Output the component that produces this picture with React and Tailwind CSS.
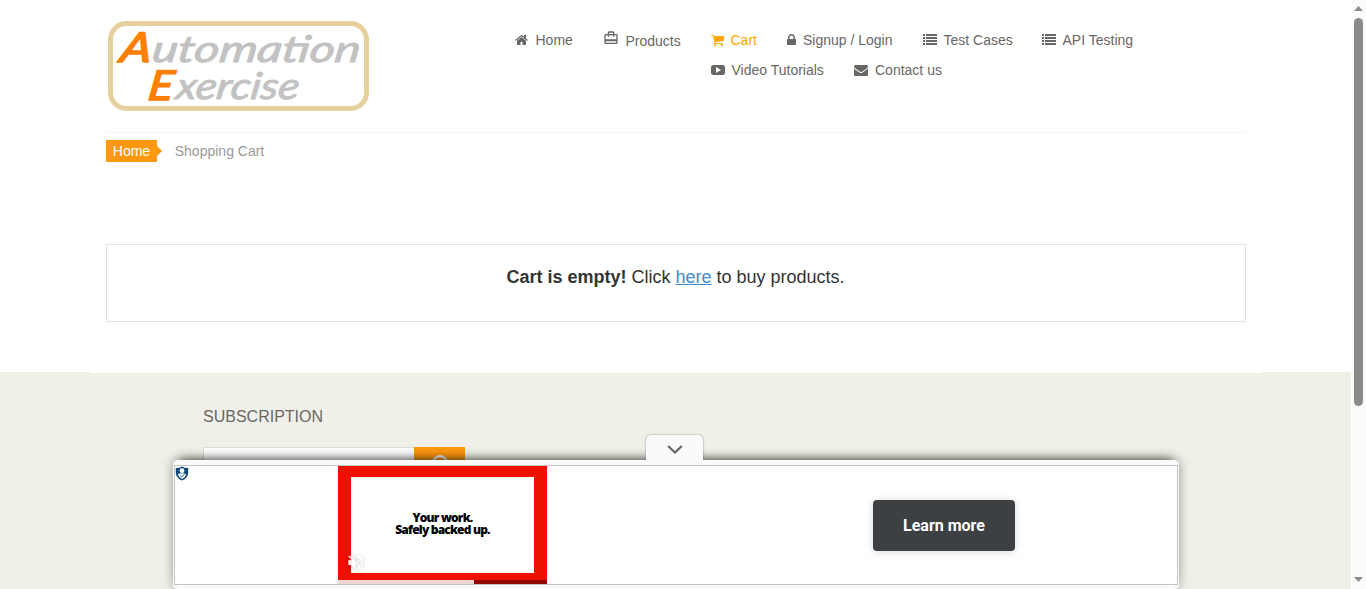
import React from "react";

const paths = {
  home: "M1472 992v480q0 26-19 45t-45 19h-384v-384h-256v384h-384q-26 0-45-19t-19-45v-480q0-1 .5-3t.5-3l575-474 575 474q1 2 1 6zm223-69l-62 74q-8 9-21 11h-3q-13 0-21-7l-692-577-692 577q-12 8-24 7-13-2-21-11l-62-74q-8-10-7-23.5t11-21.5l719-599q32-26 76-26t76 26l244 204v-195q0-14 9-23t23-9h192q14 0 23 9t9 23v408l219 182q10 8 11 21.5t-7 23.5z",
  cart: "M704 1536q0 52-38 90t-90 38-90-38-38-90 38-90 90-38 90 38 38 90zm896 0q0 52-38 90t-90 38-90-38-38-90 38-90 90-38 90 38 38 90zm128-1088v512q0 24-16.5 42.5t-40.5 21.5l-1044 122q13 60 13 70 0 16-24 64h920q26 0 45 19t19 45-19 45-45 19h-1024q-26 0-45-19t-19-45q0-11 8-31.5t16-36 21.5-40 15.5-29.5l-177-823h-204q-26 0-45-19t-19-45 19-45 45-19h256q16 0 28.5 6.5t19.5 15.5 13 24.5 8 26 5.5 29.5 4.5 26h1201q26 0 45 19t19 45z",
  lock: "M640 768h512v-192q0-106-75-181t-181-75-181 75-75 181v192zm832 96v576q0 40-28 68t-68 28h-960q-40 0-68-28t-28-68v-576q0-40 28-68t68-28h32v-192q0-184 132-316t316-132 316 132 132 316v192h32q40 0 68 28t28 68z",
  list: "M0 128h256v256H0zM384 128h1408v256H384zM0 512h256v256H0zM384 512h1408v256H384zM0 896h256v256H0zM384 896h1408v256H384zM0 1280h256v256H0zM384 1280h1408v256H384z",
  video: "M300 256H1492Q1792 256 1792 556V1236Q1792 1536 1492 1536H300Q0 1536 0 1236V556Q0 256 300 256ZM640 500V1290L1280 896Z",
  mail: "M1792 710v794q0 66-47 113t-113 47h-1472q-66 0-113-47t-47-113v-794q44 49 101 87 362 246 497 345 57 42 92.5 65.5t94.5 48 110 24.5h2q51 0 110-24.5t94.5-48 92.5-65.5q170-123 498-345 57-39 100-87zm0-294q0 79-49 151t-122 123q-376 261-468 325-10 7-42.5 31t-54 38.5-52 32.5-57.5 27-50 9h-2q-23 0-50-9t-57.5-27-52-32.5-54-38.5-42.5-31q-91-64-262-182.5t-205-142.5q-62-42-117-115.5t-55-136.5q0-78 41.5-130t118.5-52h1472q65 0 112.5 47t47.5 113z",
};

function Glyph({ name, className, viewBox = "0 0 1792 1792" }) {
  return (
    <svg className={`h-[14px] shrink-0 ${className}`} viewBox={viewBox} fill="currentColor" fillRule="evenodd">
      <path d={paths[name]} />
    </svg>
  );
}

function NavItem({ className, children }) {
  return <a className={`flex h-5 shrink-0 items-center whitespace-nowrap ${className}`}>{children}</a>;
}

function Logo() {
  return (
    <svg className="mt-[21px] ml-0.5 h-[90px] w-[261px] shrink-0" viewBox="0 0 261 90">
      <rect x="2.5" y="2.5" width="256" height="85" rx="16" fill="white" stroke="#e6d09e" strokeWidth="5" />
      <g fontFamily="Lato, sans-serif" fontStyle="italic" fill="#c2c2c2" stroke="#c2c2c2" strokeWidth="0.9">
        <text transform="translate(11 41) skewX(-10)" fontSize="41" fill="#ff8000" stroke="#ff8000" strokeWidth="1.6" textLength="31" lengthAdjust="spacingAndGlyphs">A</text>
        <text transform="translate(43 41) skewX(-8)" fontSize="37" textLength="208" lengthAdjust="spacingAndGlyphs">utomation</text>
        <text transform="translate(39 79) skewX(-8)" fontSize="41" fill="#ff8000" stroke="#ff8000" strokeWidth="1.6" textLength="25" lengthAdjust="spacingAndGlyphs">E</text>
        <text transform="translate(67 78) skewX(-8)" fontSize="37" textLength="123" lengthAdjust="spacingAndGlyphs">xercise</text>
      </g>
    </svg>
  );
}

function Header() {
  return (
    <header className="mx-[106px] flex h-[133px] w-[1140px] border-b border-[#f5f5f5]">
      <Logo />
      <nav className="mt-[30px] ml-[146px] flex flex-col gap-2.5 text-[14px] leading-5 text-[#696763]">
        <div className="flex">
          <NavItem className="w-[88px]">
            <Glyph name="home" className="mr-[7.5px] w-[13px]" viewBox="64 0 1664 1792" />Home
          </NavItem>
          <NavItem className="w-[108px]">
            <svg className="-mt-1 mr-[6.5px] h-4 w-4 shrink-0" viewBox="0 0 24 24" fill="currentColor">
              <path d="M20 6h-3V4c0-1.11-.89-2-2-2H9c-1.11 0-2 .89-2 2v2H4c-1.11 0-2 .89-2 2v11c0 1.11.89 2 2 2h16c1.11 0 2-.89 2-2V8c0-1.11-.89-2-2-2zM9 4h6v2H9V4zm11 15H4v-2h16v2zm0-5H4V8h3v2h2V8h6v2h2V8h3v6z" />
            </svg>
            <span className="mt-0.5">Products</span>
          </NavItem>
          <NavItem className="w-[76px] text-[#ffa500]">
            <Glyph name="cart" className="mr-[6.5px] w-[13px]" viewBox="64 0 1664 1792" />Cart
          </NavItem>
          <NavItem className="w-[136px]">
            <Glyph name="lock" className="mr-[7px] w-[9px]" viewBox="320 0 1152 1792" />Signup / Login
          </NavItem>
          <NavItem className="w-[119px]"><Glyph name="list" className="mr-[6.5px] w-[14px]" />Test Cases</NavItem>
          <NavItem className="w-[100px]"><Glyph name="list" className="mr-[6.5px] w-[14px]" />API Testing</NavItem>
        </div>
        <div className="ml-[196px] flex">
          <NavItem className="w-[143px]"><Glyph name="video" className="mr-[6.5px] w-[14px]" />Video Tutorials</NavItem>
          <NavItem className=""><Glyph name="mail" className="mr-[7px] w-[14px]" />Contact us</NavItem>
        </div>
      </nav>
    </header>
  );
}

function AdBanner() {
  return (
    <aside className="absolute top-[435px] left-[173px] flex w-[1006px] flex-col">
      <div className="absolute top-[25px] h-[129px] w-[1006px] rounded-[5px] shadow-[0_-7px_10px_-7px_rgba(0,0,0,0.7),0_0_12px_rgba(0,0,0,0.3)]" />
      <div className="relative ml-[473px] flex h-[25px] w-[57px] items-center justify-center rounded-t-[5px] bg-[#fafafa] shadow-[0_0_2px_rgba(0,0,0,0.45)]">
        <svg className="mt-[4px] h-[9px] w-4" viewBox="0 0 16 9" fill="none" stroke="#616161" strokeWidth="2">
          <path d="M1.2 1l6.8 6.5L14.8 1" />
        </svg>
      </div>
      <div className="relative h-[129px] rounded-[5px] bg-[#fafafa] px-px pt-[4.5px]">
        <div className="flex h-[120px] border border-[#c5c5c5] bg-white">
          <svg className="h-[15px] w-[14px] shrink-0" viewBox="0 0 14 15">
            <path d="M7 .4Q9.5 2 13.2 2V7Q13 12 7 14.6Q1 12 .8 7V2Q4.5 2 7 .4Z" fill="#134a7c" />
            <circle cx="7" cy="4.7" r="2.4" fill="white" />
            <path d="M2.8 8.2Q7 6.4 11.2 8.2Q10.5 11.2 7 13Q3.5 11.2 2.8 8.2Z" fill="white" />
            <path d="M5 9.5l1.5 1.4L9.5 8.5" fill="none" stroke="#134a7c" strokeWidth=".9" />
          </svg>
          <div className="relative ml-[149px] flex h-[118px] w-[209px] shrink-0 flex-col bg-[#ec1100]">
            <div className="mt-[11px] ml-[13px] flex h-24 w-[183px] flex-col items-center justify-center bg-white pb-0.5 font-['Open_Sans',sans-serif] text-[12px] leading-3 font-extrabold tracking-[-0.8px] text-black">
              <span>Your work.</span>
              <span>Safely backed up.</span>
            </div>
            <div className="mt-[7px] flex h-1 w-full bg-[#8f0900]"><div className="h-full w-[136px] bg-[#f1d5d3]" /></div>
            <svg className="absolute top-[87px] left-[8px] h-[19px] w-[19px] drop-shadow-[0_0_3px_rgba(0,0,0,0.25)]" viewBox="0 0 24 24" fill="white">
              <path d="M16.5 12c0-1.77-1.02-3.29-2.5-4.03v2.21l2.45 2.45c.03-.2.05-.41.05-.63zm2.5 0c0 .94-.2 1.82-.54 2.64l1.51 1.51C20.63 14.91 21 13.5 21 12c0-4.28-2.99-7.86-7-8.77v2.06c2.89.86 5 3.54 5 6.71zM4.27 3L3 4.27 7.73 9H3v6h4l5 5v-6.73l4.25 4.25c-.67.52-1.42.93-2.25 1.18v2.06c1.38-.31 2.63-.95 3.69-1.81L19.73 21 21 19.73l-9-9L4.27 3zM12 4L9.91 6.09 12 8.18V4z" />
            </svg>
          </div>
          <button className="mt-[34px] ml-[326px] flex h-[51px] w-[142px] items-center justify-center rounded-[4px] bg-[#3c4043] pt-0.5 font-['Roboto',sans-serif] text-[16px] font-bold text-white shadow-[0_1px_8px_rgba(0,0,0,0.15)]">
            Learn more
          </button>
        </div>
      </div>
    </aside>
  );
}

function Footer() {
  return (
    <footer className="relative h-[217px] bg-[#f0f0e9]">
      <div className="mx-[91px] h-px w-[1170px] bg-white" />
      <div className="ml-[203px] pt-[34px]">
        <h2 className="text-[16px] leading-5 text-[#696763]">SUBSCRIPTION</h2>
        <div className="mt-5 flex">
          <div className="h-10 w-[211px] border border-r-0 border-[#dddddd] bg-white" />
          <div className="flex h-10 w-[51px] justify-center bg-[#fe980f]">
            <svg className="mt-[7px] h-5 w-5" viewBox="0 0 20 20" fill="none" stroke="#f0f0e9" strokeWidth="2.5">
              <circle cx="10" cy="10" r="7.7" />
            </svg>
          </div>
        </div>
      </div>
    </footer>
  );
}

function Scrollbar() {
  return (
    <div className="flex h-full w-[15px] shrink-0 flex-col items-center bg-[#fcfcfc]">
      <svg className="mt-[6px] h-[5px] w-[9px]" viewBox="0 0 9 5" fill="#8b8b8b"><path d="M0 5L4.5 0L9 5Z" /></svg>
      <div className="mt-[7px] h-[388px] w-[9px] rounded-full bg-[#8b8b8b]" />
      <svg className="mt-auto mb-[7px] h-[5px] w-[9px]" viewBox="0 0 9 5" fill="#8b8b8b"><path d="M0 0L4.5 5L9 0Z" /></svg>
    </div>
  );
}

export default function App() {
  return (
    <div className="flex h-[589px] w-[1366px] overflow-hidden bg-white font-['Liberation_Sans',Arial,sans-serif]">
      <div className="relative h-full w-[1351px] shrink-0 overflow-hidden">
        <Header />
        <main className="h-[239px] px-[106px] pt-[7px]">
          <div className="flex h-[22px] items-center text-[14px] leading-5">
            <span className="flex h-[22px] w-[51px] items-center justify-center bg-[#fe980f] text-white">Home</span>
            <svg className="h-[10px] w-[5px]" viewBox="0 0 5 10" fill="#fe980f"><path d="M0 0L5 5L0 10Z" /></svg>
            <span className="ml-[12.75px] text-[#999999]">Shopping Cart</span>
          </div>
          <section className="mt-[82px] h-[78px] w-[1140px] border border-[#e3e3df] pt-[19px] text-center text-[18px] leading-[26px] text-[#333333]">
            <p className="pr-px"><b>Cart is empty!</b> Click <a className="text-[#428bca] underline">here</a> to buy products.</p>
          </section>
        </main>
        <Footer />
        <AdBanner />
      </div>
      <Scrollbar />
    </div>
  );
}
